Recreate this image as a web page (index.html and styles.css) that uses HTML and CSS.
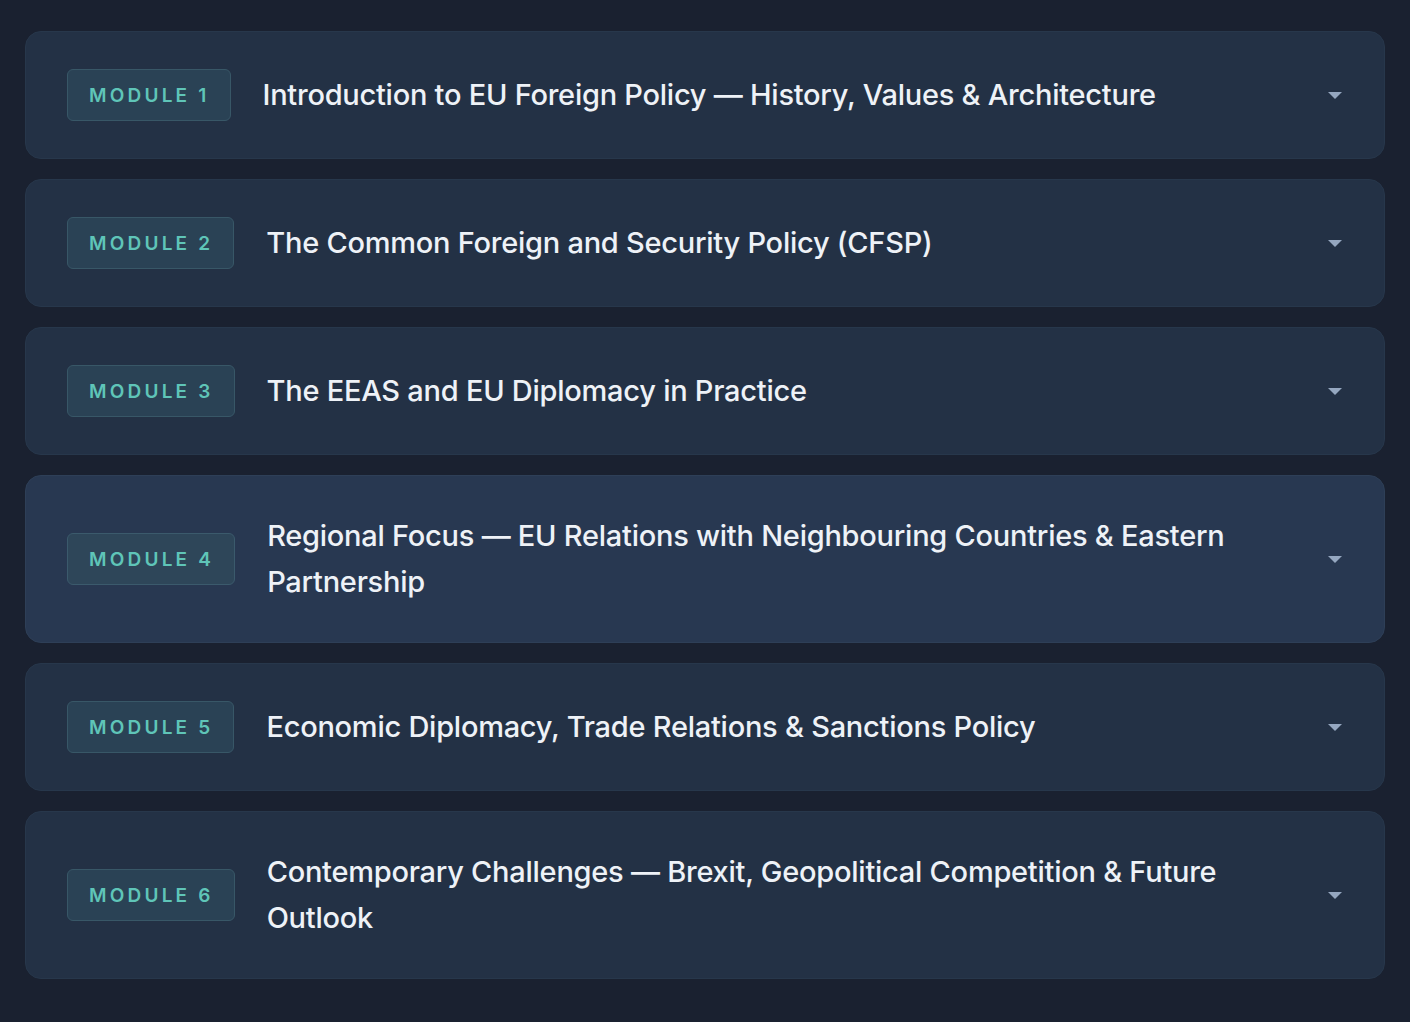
FILE: index.html
```html
<!DOCTYPE html>
<html lang="en">
<head>
    <meta charset="UTF-8">
    <meta name="viewport" content="width=device-width, initial-scale=1.0">
    <title>Course Modules</title>
    <link rel="stylesheet" href="styles.css">
</head>
<body>
    <div class="module-list">
        <div class="module-item">
            <span class="module-badge">Module 1</span>
            <h3 class="module-title">Introduction to EU Foreign Policy — History, Values &amp; Architecture</h3>
            <span class="module-caret"><svg width="14" height="7" viewBox="0 0 14 7"><polygon points="0,0 14,0 7,7"/></svg></span>
        </div>
        <div class="module-item">
            <span class="module-badge">Module 2</span>
            <h3 class="module-title">The Common Foreign and Security Policy (CFSP)</h3>
            <span class="module-caret"><svg width="14" height="7" viewBox="0 0 14 7"><polygon points="0,0 14,0 7,7"/></svg></span>
        </div>
        <div class="module-item">
            <span class="module-badge">Module 3</span>
            <h3 class="module-title">The EEAS and EU Diplomacy in Practice</h3>
            <span class="module-caret"><svg width="14" height="7" viewBox="0 0 14 7"><polygon points="0,0 14,0 7,7"/></svg></span>
        </div>
        <div class="module-item active">
            <span class="module-badge">Module 4</span>
            <h3 class="module-title">Regional Focus — EU Relations with Neighbouring Countries &amp; Eastern Partnership</h3>
            <span class="module-caret"><svg width="14" height="7" viewBox="0 0 14 7"><polygon points="0,0 14,0 7,7"/></svg></span>
        </div>
        <div class="module-item">
            <span class="module-badge">Module 5</span>
            <h3 class="module-title">Economic Diplomacy, Trade Relations &amp; Sanctions Policy</h3>
            <span class="module-caret"><svg width="14" height="7" viewBox="0 0 14 7"><polygon points="0,0 14,0 7,7"/></svg></span>
        </div>
        <div class="module-item">
            <span class="module-badge">Module 6</span>
            <h3 class="module-title">Contemporary Challenges — Brexit, Geopolitical Competition &amp; Future Outlook</h3>
            <span class="module-caret"><svg width="14" height="7" viewBox="0 0 14 7"><polygon points="0,0 14,0 7,7"/></svg></span>
        </div>
    </div>
</body>
</html>
```

FILE: styles.css
```css
* {
    margin: 0;
    padding: 0;
    box-sizing: border-box;
}

body {
    font-family: Inter, 'Noto Sans', sans-serif;
    background-color: #1a2130;
    padding: 31px 25px;
}

.module-list {
    display: flex;
    flex-direction: column;
    gap: 20px;
}

.module-item {
    display: flex;
    align-items: center;
    padding: 37px 40px 37px 41px;
    background-color: #233145;
    border: 1px solid #27374b;
    border-radius: 16px;
}

.module-item.active {
    background-color: #283851;
    border-color: #2e3f57;
}

.module-badge {
    flex-shrink: 0;
    height: 52px;
    display: flex;
    align-items: center;
    padding: 0 20px 0 21px;
    background-color: #2a4255;
    border: 1px solid #385767;
    border-radius: 6px;
    color: #5fc5b8;
    font-size: 19px;
    font-weight: 600;
    letter-spacing: 3.2px;
    text-transform: uppercase;
}

.module-item.active .module-badge {
    background-color: #2e4659;
    border-color: #3b5a6c;
}

.module-title {
    flex: 1;
    margin-left: 32px;
    margin-right: 40px;
    color: #eef2f7;
    font-size: 29px;
    font-weight: 500;
    line-height: 46px;
    letter-spacing: -0.25px;
}

.module-caret {
    flex-shrink: 0;
    width: 18px;
    display: flex;
    justify-content: center;
}

.module-caret svg {
    fill: #95a7c0;
}
```
